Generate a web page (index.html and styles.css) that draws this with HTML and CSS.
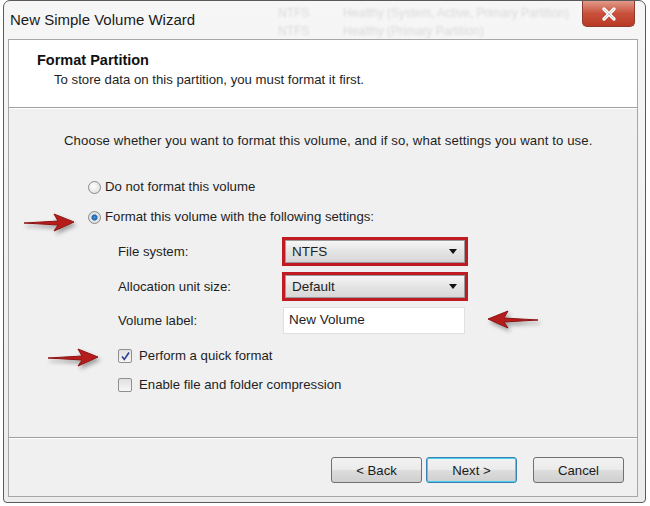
FILE: index.html
```html
<!DOCTYPE html>
<html>
<head>
<meta charset="utf-8">
<link rel="stylesheet" href="styles.css">
</head>
<body>
<div class="window">
  <div class="titlebar">
    <span class="title">New Simple Volume Wizard</span>
    <span class="ghost g1">NTFS</span>
    <span class="ghost g2">Healthy (System, Active, Primary Partition)</span>
    <span class="ghost g3">NTFS</span>
    <span class="ghost g4">Healthy (Primary Partition)</span>
    <div class="close">
      <svg width="18" height="14" viewBox="0 0 18 14"><path d="M4 2 L14 12 M14 2 L4 12" stroke="#fff" stroke-width="3.2" stroke-linecap="round"/><path d="M4 2 L14 12 M14 2 L4 12" stroke="#8a9bb0" stroke-width="1" fill="none" opacity="0.5"/></svg>
    </div>
  </div>
  <div class="client">
    <div class="header">
      <div class="h-title">Format Partition</div>
      <div class="h-sub">To store data on this partition, you must format it first.</div>
    </div>
    <div class="body">
      <div class="intro">Choose whether you want to format this volume, and if so, what settings you want to use.</div>
      <div class="options">
        <div class="row radio-row"><span class="radio"></span><span>Do not format this volume</span></div>
        <div class="row radio-row"><span class="radio checked"></span><span>Format this volume with the following settings:</span></div>
        <div class="settings">
          <div class="field">
            <span class="label">File system:</span>
            <div class="combo hl"><span>NTFS</span><span class="caret"></span></div>
          </div>
          <div class="field">
            <span class="label">Allocation unit size:</span>
            <div class="combo hl"><span>Default</span><span class="caret"></span></div>
          </div>
          <div class="field">
            <span class="label">Volume label:</span>
            <div class="textbox">New Volume</div>
          </div>
          <div class="checks">
            <div class="row"><span class="check checked"><svg width="11" height="11" viewBox="0 0 11 11"><path d="M2 5.5 L4.3 8.5 L9 1.5" stroke="#2a3f8f" stroke-width="1.6" fill="none"/></svg></span><span>Perform a quick format</span></div>
            <div class="row"><span class="check"></span><span>Enable file and folder compression</span></div>
          </div>
        </div>
      </div>
    </div>
    <div class="footer">
      <button class="btn">&lt; Back</button>
      <button class="btn default">Next &gt;</button>
      <button class="btn cancel">Cancel</button>
    </div>
  </div>
  <svg class="arrow a1" width="56" height="26" viewBox="0 0 56 26"><path d="M2 13 L36 11 L32 4 L52 12 L32 21 L36 15 Z" fill="#b51d1d" stroke="#8e1212" stroke-width="1"/></svg>
  <svg class="arrow a2" width="56" height="26" viewBox="0 0 56 26"><path d="M54 13 L20 11 L24 4 L4 12 L24 21 L20 15 Z" fill="#b51d1d" stroke="#8e1212" stroke-width="1"/></svg>
  <svg class="arrow a3" width="56" height="26" viewBox="0 0 56 26"><path d="M2 13 L36 11 L32 4 L52 12 L32 21 L36 15 Z" fill="#b51d1d" stroke="#8e1212" stroke-width="1"/></svg>
</div>
</body>
</html>
```

FILE: styles.css
```css
html, body {
  margin: 0;
  padding: 0;
  background: #ffffff;
}
body {
  font-family: "Liberation Sans", Arial, sans-serif;
  font-size: 13.2px;
  line-height: 16px;
  color: #1e1e1e;
}
.window {
  position: relative;
  width: 643px;
  height: 503px;
  margin: 0 0 0 3px;
  border: 1px solid #5a5a5a;
  border-radius: 7px 7px 4px 4px;
  background: linear-gradient(#f6f6f6, #ececec);
  box-sizing: border-box;
  padding: 0 7px 4px 4px;
  display: flex;
  flex-direction: column;
}
.titlebar {
  position: relative;
  height: 38px;
  display: flex;
  align-items: center;
  padding-left: 2px;
}
.title {
  font-size: 15px;
  color: #1a1a1a;
  position: relative;
  z-index: 1;
  margin-top: -1px;
}
.ghost {
  position: absolute;
  color: #dadada;
  font-size: 12px;
  filter: blur(1.3px);
}
.g1 { left: 270px; top: 4px; }
.g2 { left: 335px; top: 4px; }
.g3 { left: 270px; top: 22px; }
.g4 { left: 335px; top: 22px; }
.close {
  position: absolute;
  right: 3px;
  top: 0;
  width: 53px;
  height: 26px;
  border-radius: 0 0 5px 5px;
  background: linear-gradient(#e29a8a, #c8503b 50%, #b93a24);
  border: 1px solid #8d3b2e;
  border-top: none;
  box-sizing: border-box;
  display: flex;
  align-items: center;
  justify-content: center;
}
.client {
  flex: 1;
  border: 1px solid #a7a7a7;
  display: flex;
  flex-direction: column;
  background: #f0f0f0;
  margin-bottom: 1px;
}
.header {
  background: #ffffff;
  height: 68px;
  border-bottom: 1px solid #a0a0a0;
  box-shadow: 0 1px 0 #ffffff;
  box-sizing: border-box;
  padding: 12px 0 0 28px;
}
.h-title {
  font-weight: bold;
  font-size: 14.5px;
  color: #111;
}
.h-sub {
  margin-top: 4px;
  padding-left: 17px;
}
.body {
  height: 330px;
  box-sizing: border-box;
  padding: 25px 0 0 55px;
  border-bottom: 1px solid #a0a0a0;
  box-shadow: 0 1px 0 #ffffff;
}
.intro {
  letter-spacing: 0.1px;
}
.options {
  padding: 28px 0 0 24px;
  display: flex;
  flex-direction: column;
}
.row {
  display: flex;
  align-items: center;
  gap: 4px;
  height: 20px;
}
.radio-row + .radio-row {
  margin-top: 10px;
}
.radio {
  width: 11px;
  height: 11px;
  border-radius: 50%;
  border: 1px solid #8a8a8a;
  background: radial-gradient(circle at 40% 40%, #ffffff, #d8d8d8);
  flex: none;
}
.radio.checked {
  background: radial-gradient(circle, #4a9ad8 0, #1d5fa8 2.5px, #e4e4e4 3.5px, #d8d8d8);
}
.settings {
  padding: 10px 0 0 30px;
  display: flex;
  flex-direction: column;
  gap: 6px;
}
.field {
  display: flex;
  align-items: center;
}
.label {
  width: 164px;
}
.combo {
  width: 186px;
  height: 29px;
  box-sizing: border-box;
  display: flex;
  align-items: center;
  justify-content: space-between;
  padding: 0 8px 0 7px;
  background: linear-gradient(#f8f8f8, #e4e4e4 50%, #d6d6d6);
  font-size: 13.5px;
}
.combo.hl {
  border: 3px solid #c01a22;
  box-shadow: inset 0 0 0 1px #9a9a9a;
}
.caret {
  width: 0;
  height: 0;
  border-left: 4px solid transparent;
  border-right: 4px solid transparent;
  border-top: 5px solid #111;
}
.textbox {
  width: 182px;
  height: 27px;
  box-sizing: border-box;
  margin-left: 1px;
  background: #ffffff;
  border: 1px solid #e0e0e0;
  padding: 4px 5px;
  font-size: 13.5px;
}
.checks {
  padding-top: 6px;
  display: flex;
  flex-direction: column;
  gap: 9px;
}
.check {
  width: 12px;
  height: 12px;
  border: 1px solid #8f8f8f;
  border-radius: 2px;
  background: linear-gradient(#e0e0e0, #f6f6f6);
  flex: none;
  display: flex;
  align-items: center;
  justify-content: center;
  margin-right: 3px;
}
.footer {
  flex: 1;
  display: flex;
  justify-content: flex-end;
  align-items: flex-end;
  padding: 0 13px 13px 0;
  gap: 4px;
}
.btn {
  font-family: inherit;
  font-size: 13.2px;
  color: #1a1a1a;
  width: 91px;
  height: 26px;
  border: 1px solid #707070;
  border-radius: 3px;
  background: linear-gradient(#f2f2f2, #ebebeb 50%, #dddddd 51%, #cfcfcf);
  padding: 0;
}
.btn.default {
  border-color: #3c7fb1;
  box-shadow: inset 0 0 0 1px #48d0f4;
}
.btn.cancel {
  margin-left: 12px;
}
.arrow {
  position: absolute;
  filter: drop-shadow(2px 3px 2px rgba(0,0,0,0.35));
}
.a1 { left: 18px; top: 209px; }
.a2 { left: 480px; top: 306px; }
.a3 { left: 42px; top: 344px; }
```
